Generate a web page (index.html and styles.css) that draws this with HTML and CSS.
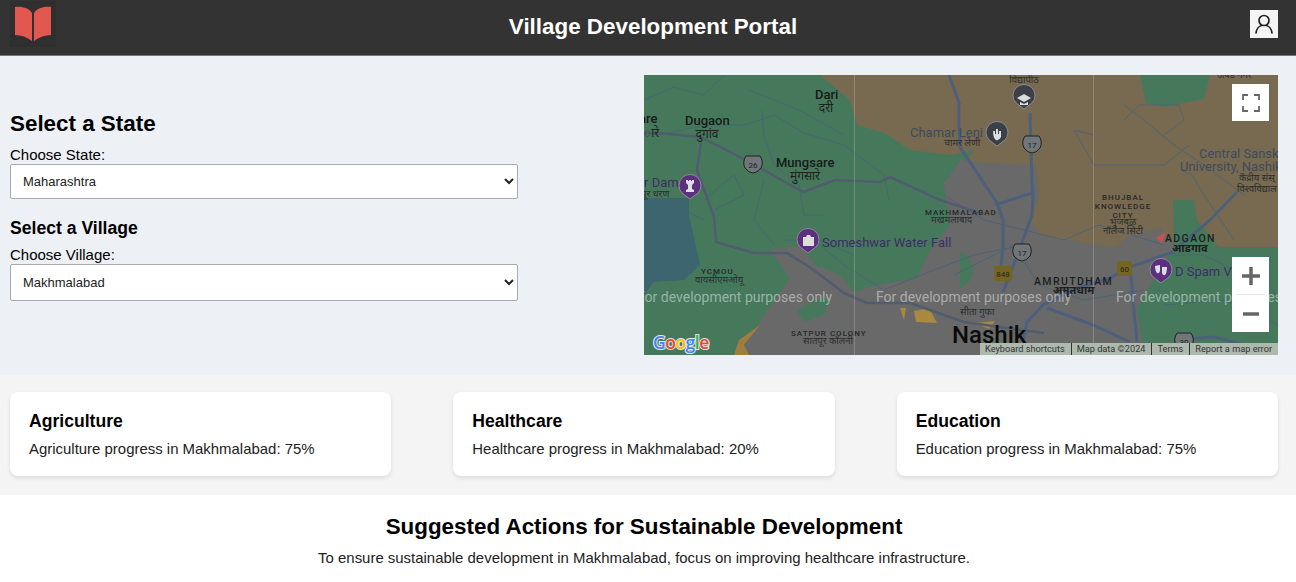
FILE: index.html
```html
<!DOCTYPE html>
<html lang="en">
<head>
    <meta name="viewport" content="width=device-width, initial-scale=1.0">
    <meta charset="UTF-8">
    <title>Village Development Portal</title>
    <link rel="stylesheet" href="styles.css">
</head>
<body>
    <header class="topbar">
        <div class="logo">
            <svg width="38" height="36" viewBox="0 0 38 36">
                <path fill="#e0584f" d="M1 1 C8 0 15 2 18 7 L18 35 C13 31 7 29 1 29 Z"/>
                <path fill="#e0584f" d="M37 1 C30 0 23 2 20 7 L20 35 C25 31 31 29 37 29 Z"/>
            </svg>
        </div>
        <h1>Village Development Portal</h1>
        <div class="user-btn">
            <svg width="22" height="22" viewBox="0 0 22 22" fill="none" stroke="#222" stroke-width="1.7" stroke-linecap="round">
                <circle cx="11" cy="7.5" r="5"/>
                <path d="M3 20 C3.5 15.5 6.5 13 8.5 12.5 M19 20 C18.5 15.5 15.5 13 13.5 12.5"/>
            </svg>
        </div>
    </header>

    <section class="selectors">
        <div class="form-side">
            <h2>Select a State</h2>
            <label for="state">Choose State:</label>
            <select id="state"><option>Maharashtra</option></select>
            <h3>Select a Village</h3>
            <label for="village">Choose Village:</label>
            <select id="village" class="tall"><option>Makhmalabad</option></select>
        </div>
        <div class="map">
            <svg class="map-art" width="634" height="280" viewBox="0 0 634 280">
                <rect width="634" height="280" fill="#46795c"/>
                <!-- land use -->
                <path fill="#786a50" d="M176 0 L206 25 L213 50 L241 58 L266 75 L306 80 L331 75 L300 108 L316 145 L396 160 L471 173 L516 153 L531 170 L575 172 L634 172 L634 0 Z"/>
                <path fill="#46795c" d="M496 0 L566 0 L560 24 L520 32 L502 28 Z"/>
                <path fill="#696969" d="M100 280 L100 273 L116 247 L146 203 L126 175 L156 170 L171 190 L196 200 L210 217 L233 210 L273 203 L286 175 L306 150 L300 110 L316 85 L346 88 L391 90 L396 120 L386 145 L396 160 L471 173 L486 160 L516 153 L531 170 L493 233 L501 280 Z"/>
                <path fill="#46795c" d="M153 236 L170 225 L186 223 L180 240 L160 247 Z"/>
                <path fill="#46795c" d="M316 177 Q326 178 329 195 Q328 208 316 213 Z"/>
                <path fill="#46795c" d="M529 125 L550 125 L553 145 L575 172 L634 172 L634 280 L501 280 L493 233 L515 215 L530 170 Z"/>
                <path fill="#3c6570" d="M0 123 L45 123 L45 140 L56 190 L40 205 L10 207 L0 220 Z"/>
                <path fill="#a07c3e" d="M116 250 L95 265 L90 280 L105 280 L100 270 Z"/>
                <path fill="#a8893f" d="M256 233 L262 233 L260 245 Z M270 236 L285 233 L293 248 L272 247 Z M331 248 L351 246 L345 254 Z"/>

                <!-- thin roads and rivers -->
                <g fill="none" stroke="#45637a" stroke-width="1" opacity=".75">
                    <path d="M0 25 L30 12 L60 20 L80 0 M16 60 L60 50 L100 50 L130 40 L160 58 L200 70 L240 100 L245 125"/>
                    <path d="M105 15 L130 25 L155 35 L200 60 M118 35 L120 60 L130 90 L155 110 L160 140 L180 140"/>
                    <path d="M60 125 L90 100 L100 120 L70 135 M120 105 L110 145 L130 170 M20 125 L60 145"/>
                    <path d="M170 165 L200 190 L240 215 L290 195 L330 180 L380 170 M140 165 L175 165 L210 180"/>
                    <path d="M300 120 L340 145 L420 165 L455 150 L520 170 M310 200 L370 170 L395 210 L440 225 L500 215"/>
                    <path d="M480 30 L500 45 L530 70 L560 90 L600 120 M450 60 L430 55 L450 90 L520 90 L545 70"/>
                    <path d="M480 45 L495 30 L535 30 L540 45 L520 60 M536 95 L548 100 L560 120 L590 165"/>
                    <path d="M530 180 L560 180 L600 200 L634 220 M520 230 L580 225 L634 250"/>
                </g>

                <!-- main roads -->
                <g fill="none" stroke="#515c6e" stroke-width="2.500" stroke-linejoin="round">
                    <path d="M0 58 L13 58 L57 62 L109 89 L159 117 L191 105 L236 107 L246 102 L296 125 L336 138"/>
                    <path d="M57 68 L53 95 L70 142 L72 167 L110 178 L143 178 L167 193 L200 218 L223 228 L266 228 L320 247 L400 258"/>
                </g>
                <g fill="none" stroke="#4e5f7c" stroke-width="3">
                    <path d="M305 0 L315 28 L315 52 L316 72 L353 128 L359 145 L359 173 L356 200"/>
                    <path d="M386 38 L388 108 L389 122 L388 140 L376 173 L359 217"/>
                    <path d="M351 130 L388 118"/>
                    <path d="M593 117 L566 145 L529 177 L483 193 L466 203 L433 213 L399 230 L383 247 L379 267"/>
                    <path d="M486 193 L493 267 M403 233 L449 250 L486 267"/>
                    <path d="M530 265 L570 262 L620 275"/>
                </g>

                <!-- tile seams -->
                <path d="M210.5 0 V280 M449.5 0 V280" stroke="#fff" stroke-opacity=".2"/>

                <!-- place names -->
                <g class="place-big">
                    <text x="41" y="50">Dugaon</text>
                    <text x="171" y="24">Dari</text>
                    <text x="132" y="92">Mungsare</text>
                    <text x="-5" y="48">are</text>
                </g>
                <g class="place-hindi">
                    <text x="63" y="63" text-anchor="middle">दुगांव</text>
                    <text x="182" y="37" text-anchor="middle">दरी</text>
                    <text x="161" y="105" text-anchor="middle">मुंगसारे</text>
                    <text x="0" y="62">ारे</text>
                </g>
                <g class="place-label">
                    <text x="266" y="62">Chamar Leni</text>
                    <text x="555" y="83">Central Sansk</text>
                    <text x="536" y="96">University, Nashik</text>
                </g>
                <g class="place-hindi small">
                    <text x="300" y="71">चामर लेणी</text>
                    <text x="380" y="8" text-anchor="middle">विद्यापीठ</text>
                    <text x="595" y="106">केंद्रीय संस्</text>
                    <text x="593" y="117">विश्वविद्याल</text>
                    <text x="287" y="148">मखमलाबाद</text>
                    <text x="479" y="150" text-anchor="middle">भुजबळ</text>
                    <text x="479" y="159" text-anchor="middle">नॉलेज सिटी</text>
                    <text x="528" y="177" class="bold">आडगाव</text>
                    <text x="409" y="219" class="bold">अमृतधाम</text>
                    <text x="51" y="208">वायसीएमओयू</text>
                    <text x="159" y="269">सातपूर कॉलनी</text>
                    <text x="316" y="240">सीता गुफा</text>
                    <text x="-3" y="122">पूर धरण</text>
                    <text x="573" y="3">अंबड नगर</text>
                </g>
                <g class="place-caps">
                    <text x="281" y="140">MAKHMALABAD</text>
                    <text x="479" y="125" text-anchor="middle">BHUJBAL</text>
                    <text x="479" y="134" text-anchor="middle">KNOWLEDGE</text>
                    <text x="479" y="143" text-anchor="middle">CITY</text>
                    <text x="57" y="199">YCMOU</text>
                    <text x="147" y="261">SATPUR COLONY</text>
                </g>
                <g class="place-area">
                    <text x="521" y="167">ADGAON</text>
                    <text x="390" y="210">AMRUTDHAM</text>
                </g>
                <g class="place-poi">
                    <text x="178" y="172">Someshwar Water Fall</text>
                    <text x="531" y="201">D Spam V</text>
                    <text x="0" y="112">r Dam</text>
                </g>
                <text class="place-city" x="308" y="268">Nashik</text>

                <!-- route shields -->
                <g class="shield">
                    <path d="M102 81 H116 Q120 87 117 93 Q113 98 109 98 Q105 98 101 93 Q98 87 102 81 Z"/>
                    <text x="109" y="93">26</text>
                    <path d="M381 61 H395 Q399 67 396 73 Q392 78 388 78 Q384 78 380 73 Q377 67 381 61 Z"/>
                    <text x="388" y="73">17</text>
                    <path d="M371 169 H385 Q389 175 386 181 Q382 186 378 186 Q374 186 370 181 Q367 175 371 169 Z"/>
                    <text x="378" y="181">17</text>
                    <path d="M533 258 H547 Q551 264 548 270 Q544 275 540 275 Q536 275 532 270 Q529 264 533 258 Z"/>
                    <text x="540" y="270">30</text>
                </g>
                <g class="shield-yellow">
                    <rect x="350" y="191" width="18" height="15" rx="3"/>
                    <text x="359" y="202">848</text>
                    <rect x="473" y="186" width="15" height="15" rx="3"/>
                    <text x="480.500" y="197">60</text>
                </g>

                <!-- pins -->
                <g class="pin purple">
                    <path d="M46 124 L38 118 A11 11 0 1 1 54 118 Z"/>
                    <path class="glyph" d="M42 117 H50 V115 L48 114 V110 L50 108 V105 H48 V106 H47 V105 H45 V106 H44 V105 H42 V108 L44 110 V114 L42 115 Z"/>
                </g>
                <g class="pin purple">
                    <path d="M164 178 L156 172 A11 11 0 1 1 172 172 Z"/>
                    <path class="glyph" d="M159 162 H162 L163 160 H166 L167 162 H170 V171 H159 Z"/>
                </g>
                <g class="pin purple">
                    <path d="M517 208 L509 202 A11 11 0 1 1 525 202 Z"/>
                    <path class="glyph" d="M511 191 L516 190 V196 Q515 199 513 198 Q511 196 511 191 Z M518 192 L523 192 Q523 198 521 200 Q519 201 518 198 Z"/>
                </g>
                <g class="pin dark">
                    <path d="M380 34 L372 28 A11 11 0 1 1 388 28 Z"/>
                    <path class="glyph" d="M373 23 L380 19 L387 23 L380 27 Z M376 27 L380 29 L384 27 V30 H376 Z"/>
                </g>
                <g class="pin dark">
                    <path d="M353 71 L345 65 A11 11 0 1 1 361 65 Z"/>
                    <path class="glyph" d="M349 56 H351 V59 H352 V54 H354 V59 H355 V56 H357 V62 Q355 66 352 65 Q349 63 349 56 Z"/>
                </g>
                <path fill="#c9524e" d="M512 163 L522 157 L518 168 Z"/>

                <!-- dev only watermark -->
                <g class="watermark">
                    <text x="-7" y="227">For development purposes only</text>
                    <text x="232" y="227">For development purposes only</text>
                    <text x="472" y="227">For development purposes only</text>
                </g>

                <text class="google-logo" x="9" y="274"><tspan fill="#4285f4">G</tspan><tspan fill="#ea4335">o</tspan><tspan fill="#fbbc05">o</tspan><tspan fill="#4285f4">g</tspan><tspan fill="#34a853">l</tspan><tspan fill="#ea4335">e</tspan></text>
            </svg>

            <button class="map-ctrl fullscreen">
                <svg width="18" height="18" viewBox="0 0 18 18" fill="none" stroke="#666" stroke-width="1.800">
                    <path d="M1 6 V1 H6 M12 1 H17 V6 M17 12 V17 H12 M6 17 H1 V12"/>
                </svg>
            </button>
            <div class="map-ctrl zoom-box">
                <div class="zoom-btn">
                    <svg width="18" height="18" viewBox="0 0 18 18"><path d="M0 9 H18 M9 0 V18" stroke="#666" stroke-width="3.500"/></svg>
                </div>
                <div class="zoom-sep"></div>
                <div class="zoom-btn">
                    <svg width="18" height="18" viewBox="0 0 18 18"><path d="M1 9 H17" stroke="#666" stroke-width="3.500"/></svg>
                </div>
            </div>
            <div class="map-footer">
                <span>Keyboard shortcuts</span>
                <span>Map data ©2024</span>
                <span>Terms</span>
                <span>Report a map error</span>
            </div>
        </div>
    </section>

    <section class="cards">
        <div class="card">
            <h3>Agriculture</h3>
            <p>Agriculture progress in Makhmalabad: 75%</p>
        </div>
        <div class="card">
            <h3>Healthcare</h3>
            <p>Healthcare progress in Makhmalabad: 20%</p>
        </div>
        <div class="card">
            <h3>Education</h3>
            <p>Education progress in Makhmalabad: 75%</p>
        </div>
    </section>

    <section class="actions">
        <h2>Suggested Actions for Sustainable Development</h2>
        <p>To ensure sustainable development in Makhmalabad, focus on improving healthcare infrastructure.</p>
    </section>
</body>
</html>
```

FILE: styles.css
```css
body {
    font-family: "Liberation Sans", Arial, sans-serif;
    margin: 0;
    background-color: #fff;
    color: #000;
}

/* top bar */
.topbar {
    display: flex;
    align-items: center;
    justify-content: space-between;
    height: 55px;
    padding: 0 18px 0 10px;
    background-color: #333;
    border-bottom: 1px solid #777;
}
.topbar h1 {
    margin: 0 0 2px;
    color: #fff;
    font-size: 22.4px;
    font-weight: bold;
}
.logo {
    width: 46px;
    height: 46px;
    margin-top: -8px;
    display: flex;
    align-items: center;
    justify-content: center;
    background-color: #2f2f2f;
}
.user-btn {
    width: 28px;
    height: 28px;
    margin-top: -8px;
    display: flex;
    align-items: center;
    justify-content: center;
    background-color: #f5f5f5;
}

/* state + village form and map */
.selectors {
    display: flex;
    justify-content: space-between;
    align-items: center;
    padding: 19px 18px 20px 10px;
    background-color: #edf0f5;
}
.form-side {
    width: 508px;
    margin-top: -19px;
}
.form-side h2 {
    margin: 0 0 8px;
    font-size: 22.4px;
    line-height: 28px;
}
.form-side h3 {
    margin: 18px 0 7px;
    font-size: 17.6px;
    line-height: 22px;
}
.form-side label {
    display: block;
    margin-bottom: 1px;
    font-size: 15px;
    line-height: 17px;
}
select {
    display: block;
    width: 100%;
    height: 35px;
    padding: 0 8px;
    font-family: "Liberation Sans", Arial, sans-serif;
    font-size: 13px;
    color: #222;
    background-color: #fff;
    border: 1px solid #aaa;
    border-radius: 2px;
}
select.tall {
    height: 37px;
}

/* map */
.map {
    position: relative;
    width: 634px;
    height: 280px;
    overflow: hidden;
    background-color: #46795c;
}
.map-art {
    display: block;
    font-family: Roboto, sans-serif;
}
.place-big { font-size: 13px; font-weight: 500; fill: #161a18; }
.place-hindi { font-family: "Noto Sans", "DejaVu Sans", sans-serif; font-size: 12px; fill: #1c2220; }
.place-hindi.small { font-size: 9.500px; fill: #2a2e30; }
.place-hindi .bold { font-size: 11px; font-weight: bold; fill: #1c1e20; }
.place-label { font-size: 13px; fill: #3c4a5c; }
.place-caps { font-size: 8px; font-weight: 500; letter-spacing: 1px; fill: #26282a; }
.place-area { font-size: 10.500px; font-weight: 500; letter-spacing: 1.400px; fill: #1c1e20; }
.place-poi { font-size: 13px; fill: #3d2d66; }
.place-city { font-size: 24px; font-weight: 500; fill: #0b0b0b; }
.shield path { fill: #70767a; stroke: #222; stroke-width: 1; }
.shield text { font-size: 8px; fill: #1d1d1d; text-anchor: middle; }
.shield-yellow rect { fill: #766520; }
.shield-yellow text { font-size: 8px; fill: #222; text-anchor: middle; }
.pin path { stroke: #8c8c90; stroke-width: 1; }
.pin.purple path { fill: #5c2f80; }
.pin.dark path { fill: #3b4048; }
.pin path.glyph { fill: #ddd; stroke: none; }
.watermark text { font-size: 14px; fill: #fff; fill-opacity: .45; }
.google-logo {
    font-family: "Open Sans", sans-serif;
    font-size: 17.500px;
    font-weight: 600;
    letter-spacing: -.500px;
    stroke: #e8e8e8;
    stroke-width: 2px;
    paint-order: stroke;
}
.map-ctrl {
    position: absolute;
    right: 9px;
    width: 37px;
    background-color: #fff;
    border: 0;
    padding: 0;
}
.fullscreen {
    top: 9px;
    height: 37px;
    display: flex;
    align-items: center;
    justify-content: center;
}
.zoom-box {
    top: 182px;
    height: 75px;
}
.zoom-btn {
    height: 37px;
    display: flex;
    align-items: center;
    justify-content: center;
}
.zoom-sep {
    height: 1px;
    margin: 0 4px;
    background-color: #e6e6e6;
}
.map-footer {
    position: absolute;
    right: 0;
    bottom: 0;
    display: flex;
    height: 12px;
    line-height: 12px;
    padding-left: 5px;
    font-family: Roboto, sans-serif;
    font-size: 9.200px;
    color: #333;
    background-color: #aeb9ae;
}
.map-footer span {
    padding: 0 6px 0 5px;
    border-left: 1px solid #333;
}
.map-footer span:first-child {
    padding-left: 0;
    border-left: 0;
}

/* progress cards */
.cards {
    display: flex;
    justify-content: space-between;
    gap: 62px;
    padding: 17px 18px 19px 10px;
    background-color: #f4f4f4;
}
.card {
    flex: 1;
    height: 84px;
    box-sizing: border-box;
    padding: 19px 19px 0;
    background-color: #fff;
    border-radius: 8px;
    box-shadow: 0 2px 4px rgba(0,0,0,0.1);
}
.card h3 {
    margin: 0 0 8px;
    font-size: 17.6px;
    line-height: 21px;
}
.card p {
    margin: 0;
    font-size: 14.950px;
    line-height: 18px;
    color: #222;
}

/* suggestions */
.actions {
    padding: 18px 18px 0 10px;
    text-align: center;
}
.actions h2 {
    margin: 0 0 8px;
    font-size: 22.4px;
    line-height: 28px;
}
.actions p {
    margin: 0;
    font-size: 14.950px;
    line-height: 18px;
    color: #222;
}
```
